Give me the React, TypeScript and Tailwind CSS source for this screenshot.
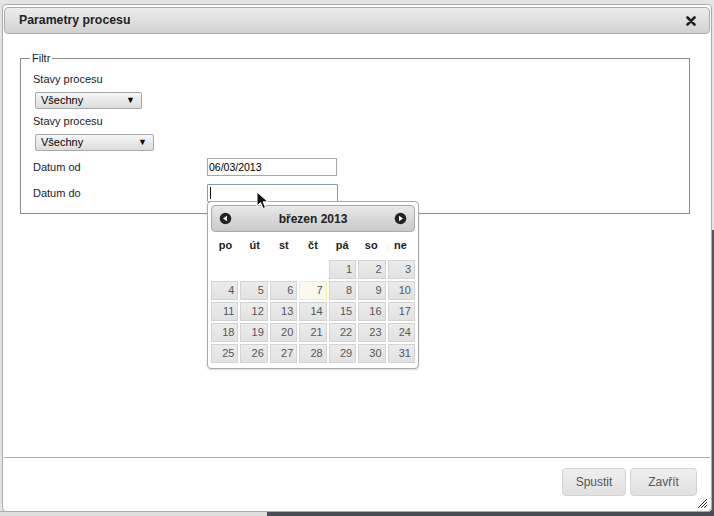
const days = [
  ['', '', '', '', '1', '2', '3'],
  ['4', '5', '6', '7', '8', '9', '10'],
  ['11', '12', '13', '14', '15', '16', '17'],
  ['18', '19', '20', '21', '22', '23', '24'],
  ['25', '26', '27', '28', '29', '30', '31'],
];

const dayNames = ['po', 'út', 'st', 'čt', 'pá', 'so', 'ne'];

function SelectBox({ width }: { width: string }) {
  return (
    <div
      className={`${width} h-[17px] flex items-center justify-between pl-[5px] pr-[6px] border border-[#a8a8a8] rounded-[2px] bg-gradient-to-b from-[#f6f6f6] to-[#dcdcdc] text-[11px] text-black`}
    >
      <span>Všechny</span>
      <span className="text-[9px] leading-none">▼</span>
    </div>
  );
}

function NavIcon({ dir }: { dir: 'prev' | 'next' }) {
  return (
    <svg width="13" height="13" viewBox="0 0 13 13">
      <circle cx="6.5" cy="6.5" r="5.8" fill="#222" />
      {dir === 'prev' ? (
        <path d="M4 6.5 L8 3.8 L8 9.2 Z" fill="#fff" />
      ) : (
        <path d="M9 6.5 L5 3.8 L5 9.2 Z" fill="#fff" />
      )}
    </svg>
  );
}

function DatePicker() {
  return (
    <div className="absolute left-[207px] top-[201px] w-[212px] h-[168px] bg-white border border-[#aaaaaa] rounded-[4px] p-[3px] shadow-[0_1px_2px_rgba(0,0,0,0.15)]">
      <div className="h-[27px] flex items-center justify-between px-[7px] border border-[#aaaaaa] rounded-[4px] bg-gradient-to-b from-[#e9e9e9] to-[#c9c9c9]">
        <NavIcon dir="prev" />
        <span className="text-[12px] font-bold text-[#222]">březen 2013</span>
        <NavIcon dir="next" />
      </div>
      <div className="grid grid-cols-7 mt-[5px] mb-[6px]">
        {dayNames.map((d) => (
          <div key={d} className="text-center text-[11px] font-bold text-[#222] h-[17px] leading-[17px]">
            {d}
          </div>
        ))}
      </div>
      <div className="flex flex-col gap-[2px]">
        {days.map((row, i) => (
          <div key={i} className="grid grid-cols-7 gap-x-[2px]">
            {row.map((d, j) =>
              d === '' ? (
                <div key={j} className="h-[19px]" />
              ) : (
                <div
                  key={j}
                  className={`h-[19px] text-right pr-[3px] text-[11px] leading-[17px] text-[#555] border ${
                    d === '7'
                      ? 'border-[#fcefa1] bg-[#fbf9ee]'
                      : 'border-[#d3d3d3] bg-gradient-to-b from-[#ececec] to-[#e2e2e2]'
                  }`}
                >
                  {d}
                </div>
              )
            )}
          </div>
        ))}
      </div>
    </div>
  );
}

function Cursor() {
  return (
    <svg className="absolute left-[256px] top-[191px]" width="14" height="20" viewBox="0 0 14 20">
      <path d="M1 1 L1 15 L4.5 11.5 L7 17.5 L9.5 16.5 L7 10.8 L12 10.8 Z" fill="#111" stroke="#fff" strokeWidth="1" />
    </svg>
  );
}

export default function App() {
  return (
    <div
      className="relative w-[714px] h-[516px] overflow-hidden bg-[#e4e4e2]"
      style={{ fontFamily: '"Liberation Sans", Arial, sans-serif' }}
    >
      {/* background behind the dialog */}
      <div className="absolute left-0 right-0 bottom-0 h-[5px] flex">
        <div className="w-[267px] bg-[#dedede] border-t border-[#aaa]" />
        <div className="flex-1 bg-[#4b4b57]" />
      </div>
      <div className="absolute right-0 top-[230px] bottom-[5px] w-[3px] bg-[#55555f]" />

      {/* dialog */}
      <div className="absolute left-[2px] top-[4px] w-[710px] h-[508px] bg-white border border-[#aaaaaa] rounded-[4px] pt-[2px] px-[1px] flex flex-col">
        <div className="h-[27px] shrink-0 flex items-center justify-between pl-[14px] pr-[13px] border border-[#aaaaaa] rounded-[4px] bg-gradient-to-b from-[#ececec] to-[#d2d2d2]">
          <span className="text-[12.3px] font-bold text-[#222]">Parametry procesu</span>
          <svg width="10" height="10" viewBox="0 0 10 10">
            <path d="M1.5 1.5 L8.5 8.5 M8.5 1.5 L1.5 8.5" stroke="#222" strokeWidth="2.6" strokeLinecap="round" />
          </svg>
        </div>

        <div className="flex-1 pt-[16px] pl-[16px] pr-[20px]">
          <fieldset className="border border-[#8c8c8c] h-[164px] px-0">
            <legend className="ml-[9px] px-[2px] text-[11px] leading-[16px] text-[#222]">Filtr</legend>
            <div className="flex flex-col px-[12px] text-[11px] text-[#222]">
              <div className="h-[16px] leading-[16px] mt-[5px]">Stavy procesu</div>
              <div className="mt-[5px] pl-[2px]">
                <SelectBox width="w-[107px]" />
              </div>
              <div className="h-[16px] leading-[16px] mt-[4px]">Stavy procesu</div>
              <div className="mt-[5px] pl-[2px]">
                <SelectBox width="w-[119px]" />
              </div>
              <div className="flex items-center mt-[7px]">
                <div className="w-[174px]">Datum od</div>
                <div className="w-[130px] h-[18px] border border-[#a8a8a8] text-[10.5px] leading-[16px] pl-[1px] text-black">
                  06/03/2013
                </div>
              </div>
              <div className="flex items-center mt-[8px]">
                <div className="w-[174px]">Datum do</div>
                <div className="w-[131px] h-[18px] border border-[#7f9db9] rounded-[1px] flex items-center pl-[2px]">
                  <div className="w-[1px] h-[12px] bg-black" />
                </div>
              </div>
            </div>
          </fieldset>
        </div>

        <div className="relative h-[54px] shrink-0 border-t border-[#aaaaaa] flex justify-end items-start gap-[4px] pt-[10px] pr-[13px]">
          <button className="w-[64px] h-[28px] border border-[#d3d3d3] rounded-[4px] bg-gradient-to-b from-[#f0f0f0] to-[#e0e0e0] text-[12px] text-[#555]">
            Spustit
          </button>
          <button className="w-[67px] h-[28px] border border-[#d3d3d3] rounded-[4px] bg-gradient-to-b from-[#f0f0f0] to-[#e0e0e0] text-[12px] text-[#555]">
            Zavřít
          </button>
          <svg className="absolute right-[2px] bottom-[2px]" width="12" height="12" viewBox="0 0 12 12">
            <path d="M11 2 L2 11 M11 5 L5 11 M11 8 L8 11" stroke="#333" strokeWidth="1" />
          </svg>
        </div>
      </div>

      <DatePicker />
      <Cursor />
    </div>
  );
}
